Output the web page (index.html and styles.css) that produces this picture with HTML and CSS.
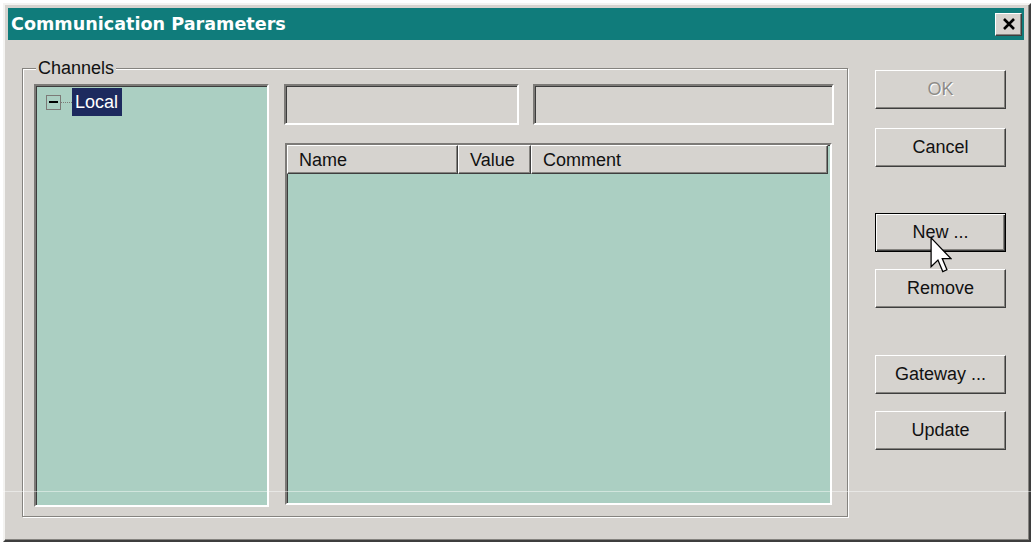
FILE: index.html
```html
<!DOCTYPE html>
<html lang="en">
<head>
    <meta charset="UTF-8">
    <title>Communication Parameters</title>
    <link rel="stylesheet" href="styles.css">
</head>
<body>

    <div class="window">
        <div class="titlebar">
            <span class="title">Communication Parameters</span>
            <button class="close-btn">
                <svg width="14" height="12" viewBox="0 0 14 12">
                    <path d="M2 1 L12 11 M12 1 L2 11" stroke="#000" stroke-width="2.6" fill="none"/>
                </svg>
            </button>
        </div>

        <div class="content">
            <fieldset class="group">
                <legend>Channels</legend>
                <div class="group-body">
                    <div class="tree sunken">
                        <div class="tree-item">
                            <span class="expander"><span class="minus"></span></span>
                            <span class="dots"></span>
                            <span class="tree-label">Local</span>
                        </div>
                    </div>

                    <div class="right-col">
                        <div class="fields">
                            <div class="field sunken field-a"></div>
                            <div class="field sunken field-b"></div>
                        </div>
                        <div class="list sunken">
                            <div class="list-header">
                                <div class="col col-name">Name</div>
                                <div class="col col-value">Value</div>
                                <div class="col col-comment">Comment</div>
                            </div>
                        </div>
                    </div>
                </div>
            </fieldset>

            <div class="buttons">
                <button class="btn disabled">OK</button>
                <button class="btn gap-s">Cancel</button>
                <button class="btn default gap-l">New ...</button>
                <button class="btn gap-xs">Remove</button>
                <button class="btn gap-l2">Gateway ...</button>
                <button class="btn gap-xs">Update</button>
            </div>
        </div>
    </div>

    <!-- mouse pointer over the New button -->
    <svg class="cursor" width="22" height="36" viewBox="0 0 12 20">
        <path d="M0.5 0.5 L0.5 16.5 L4.3 12.8 L7 19.2 L9.3 18.2 L6.7 12 L11.5 12 Z" fill="#fff" stroke="#000" stroke-width="0.7" stroke-linejoin="miter"/>
    </svg>

    <div class="scanline"></div>

</body>
</html>
```

FILE: styles.css
```css
body {
    margin: 0;
    padding: 3px 0 0 3px;
    background: #ffffff;
    font-family: "Liberation Sans", Arial, sans-serif;
    font-size: 18px;
    color: #000;
}

.window {
    width: 1028px;
    height: 539px;
    box-sizing: border-box;
    background: #d6d3cf;
    border: 2px solid;
    border-color: #f4f3f1 #3e3e3e #3e3e3e #f4f3f1;
    box-shadow: inset -1px -1px 0 #85837f;
    padding: 3px 5px 3px 3px;
}

.titlebar {
    height: 32px;
    background: #107c7b;
    display: flex;
    align-items: center;
    justify-content: space-between;
    padding: 0 2px 0 3px;
}

.title {
    color: #fff;
    font-family: "DejaVu Sans", Verdana, sans-serif;
    font-weight: bold;
    font-size: 17.6px;
}

.close-btn {
    width: 27px;
    height: 23px;
    padding: 0;
    background: #d6d3cf;
    border: 1px solid;
    border-color: #fff #3e3e3e #3e3e3e #fff;
    box-shadow: inset -1px -1px 0 #85837f;
    display: flex;
    align-items: center;
    justify-content: center;
}

.content {
    display: flex;
    align-items: flex-start;
}

/* etched group box */
.group {
    margin: 18px 0 0 14px;
    padding: 0 11px 9px 11px;
    width: 826px;
    box-sizing: border-box;
    border: 1px solid #85837f;
    box-shadow: inset 1px 1px 0 #fff, 1px 1px 0 #fff;
}

.group legend {
    margin-left: 2px;
    padding: 0 2px;
    line-height: 20px;
    background: #d6d3cf;
    color: #111;
}

.group-body {
    display: flex;
    gap: 15px;
    padding-top: 6px;
}

.sunken {
    box-sizing: border-box;
    border: 2px solid;
    border-color: #7c7a77 #fff #fff #7c7a77;
    box-shadow: inset 1px 1px 0 #3c3c3c;
}

.tree {
    width: 235px;
    height: 423px;
    background: #abcfc2;
    padding: 2px 0 0 10px;
}

.tree-item {
    display: flex;
    align-items: center;
    height: 28px;
}

.expander {
    width: 15px;
    height: 15px;
    box-sizing: border-box;
    border: 1px solid #7c7a77;
    display: flex;
    align-items: center;
    justify-content: center;
}

.minus {
    width: 9px;
    height: 2px;
    background: #000;
}

.dots {
    width: 11px;
    border-top: 1px dotted #7c7a77;
}

.tree-label {
    background: #1d2a5e;
    color: #fff;
    height: 28px;
    line-height: 28px;
    padding: 0 4px 0 3px;
}

.right-col {
    width: 550px;
    display: flex;
    flex-direction: column;
}

.fields {
    display: flex;
    gap: 14px;
}

.field {
    height: 41px;
    background: #d6d3cf;
}

.field-a {
    width: 235px;
}

.field-b {
    width: 301px;
}

.list {
    margin: 18px 2px 0 1px;
    height: 362px;
    background: #abcfc2;
}

.list-header {
    display: flex;
    height: 29px;
}

.col {
    box-sizing: border-box;
    height: 29px;
    line-height: 29px;
    background: #d6d3cf;
    border: 1px solid;
    border-color: #fff #3e3e3e #3e3e3e #fff;
    box-shadow: inset -1px -1px 0 #85837f;
    padding-left: 11px;
    color: #111;
}

.col-name {
    width: 171px;
}

.col-value {
    width: 73px;
}

.col-comment {
    flex: 1;
    margin-right: 2px;
}

.buttons {
    display: flex;
    flex-direction: column;
    margin: 30px 0 0 27px;
}

.btn {
    width: 131px;
    height: 39px;
    box-sizing: border-box;
    padding: 0;
    background: #d6d3cf;
    font-family: "Liberation Sans", Arial, sans-serif;
    font-size: 18px;
    color: #111;
    border: 1px solid;
    border-color: #fff #3e3e3e #3e3e3e #fff;
    box-shadow: inset -1px -1px 0 #85837f;
}

.btn.disabled {
    color: #8e8c88;
    text-shadow: 1px 1px 0 #fff;
}

.btn.default {
    border: 1px solid #000;
    box-shadow: inset 1px 1px 0 #fff, inset -1px -1px 0 #3e3e3e, inset -2px -2px 0 #85837f;
}

.gap-xs {
    margin-top: 17px;
}

.gap-s {
    margin-top: 19px;
}

.gap-l {
    margin-top: 46px;
}

.gap-l2 {
    margin-top: 47px;
}

.cursor {
    position: absolute;
    left: 930px;
    top: 237px;
}

.scanline {
    position: absolute;
    left: 0;
    top: 491px;
    width: 1035px;
    height: 1px;
    background: rgba(255, 255, 255, 0.45);
}
```
